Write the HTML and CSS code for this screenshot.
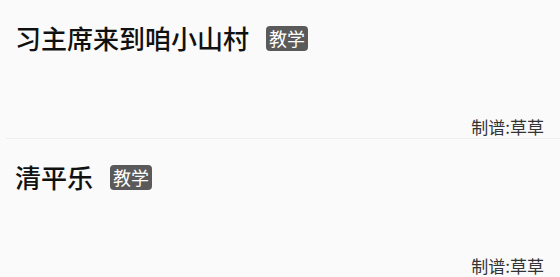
FILE: index.html
```html
<!DOCTYPE html>
<html lang="zh-CN">
<head>
  <meta charset="UTF-8">
  <meta name="viewport" content="width=device-width, initial-scale=1.0">
  <title>曲谱列表</title>
  <link rel="stylesheet" href="styles.css">
</head>
<body>
  <ul class="song-list">
    <li class="song">
      <div class="song-head">
        <span class="song-title">习主席来到咱小山村</span>
        <span class="tag">教学</span>
      </div>
      <div class="song-credit">制谱:草草</div>
    </li>
    <li class="song">
      <div class="song-head">
        <span class="song-title">清平乐</span>
        <span class="tag">教学</span>
      </div>
      <div class="song-credit">制谱:草草</div>
    </li>
  </ul>
</body>
</html>
```

FILE: styles.css
```css
body {
  margin: 0;
  background: #fafafa;
  font-family: "Noto Sans CJK SC", "Noto Sans", sans-serif;
  color: #111;
}
.song-list {
  list-style: none;
  margin: 0;
  padding: 0;
}
.song {
  margin-left: 6px;
  height: 138px;
  border-bottom: 1px solid #efefef;
  display: flex;
  flex-direction: column;
  justify-content: space-between;
}
.song-head {
  display: flex;
  align-items: center;
  gap: 17px;
  padding: 20px 0 0 9px;
  height: 36px;
}
.song-title {
  font-size: 26px;
  font-weight: 500;
  line-height: 36px;
}
.tag {
  background: #5a5a5a;
  color: #fff;
  font-size: 18px;
  line-height: 25px;
  padding: 0 3px;
  border-radius: 4px;
}
.song-credit {
  align-self: flex-end;
  padding-right: 16px;
  font-size: 17px;
  line-height: 22px;
  color: #333;
}
```
